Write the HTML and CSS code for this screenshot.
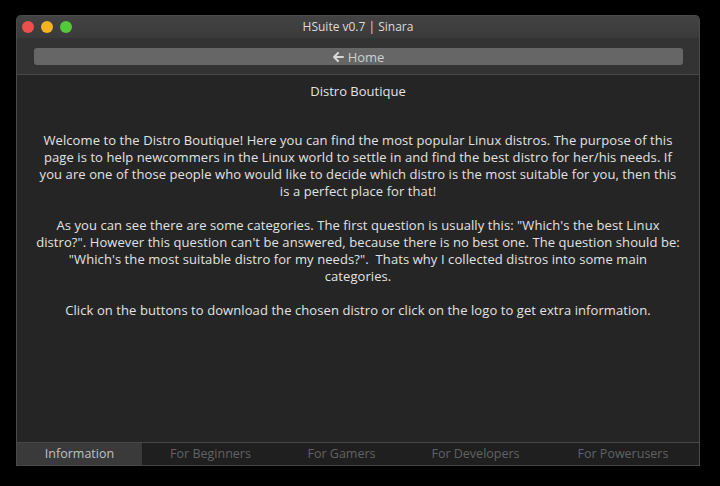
FILE: index.html
```html
<!DOCTYPE html>
<html>
<head>
<meta charset="utf-8">
<link rel="stylesheet" href="styles.css">
</head>
<body>
<div class="window">
  <div class="titlebar">
    <div class="lights">
      <span class="light red"></span>
      <span class="light yellow"></span>
      <span class="light green"></span>
    </div>
    <div class="title">HSuite v0.7 | Sinara</div>
  </div>
  <div class="toolbar">
    <div class="home-btn">
      <svg class="arrow" width="11" height="10" viewBox="0 0 11 10"><path d="M5 1 L1 5 L5 9 M1 5 H10" fill="none" stroke="#d8d8d8" stroke-width="2" stroke-linecap="round" stroke-linejoin="round"/></svg>
      <span>Home</span>
    </div>
  </div>
  <div class="content">
    <div class="heading">Distro Boutique</div>
    <p class="para">Welcome to the Distro Boutique! Here you can find the most popular Linux distros. The purpose of this<br>page is to help newcommers in the Linux world to settle in and find the best distro for her/his needs. If<br>you are one of those people who would like to decide which distro is the most suitable for you, then this<br>is a perfect place for that!</p>
    <p class="para">As you can see there are some categories. The first question is usually this: "Which's the best Linux<br>distro?". However this question can't be answered, because there is no best one. The question should be:<br>"Which's the most suitable distro for my needs?".&nbsp; Thats why I collected distros into some main<br>categories.</p>
    <p class="para">Click on the buttons to download the chosen distro or click on the logo to get extra information.</p>
  </div>
  <div class="tabs">
    <div class="tab active">Information</div>
    <div class="tab">For Beginners</div>
    <div class="tab">For Gamers</div>
    <div class="tab">For Developers</div>
    <div class="tab">For Powerusers</div>
  </div>
</div>
</body>
</html>
```
FILE: styles.css
```css
html, body {
  margin: 0;
  padding: 0;
  background: #000;
  width: 720px;
  height: 486px;
  overflow: hidden;
}
body {
  font-family: "Open Sans", "Noto Sans", sans-serif;
  font-size: 13px;
  color: #e2e2e2;
}
.window {
  margin: 15px 0 0 16px;
  width: 684px;
  height: 451px;
  box-sizing: border-box;
  border: 1px solid #4a4a4a;
  border-bottom: none;
  border-radius: 5px 5px 0 0;
  background: #323232;
  display: flex;
  flex-direction: column;
  overflow: hidden;
}
.titlebar {
  height: 22px;
  flex: none;
  position: relative;
  background: linear-gradient(#434343, #3a3a3a);
  display: flex;
  align-items: center;
  justify-content: center;
}
.lights {
  position: absolute;
  left: 5px;
  top: 5px;
  display: flex;
  gap: 7px;
}
.light {
  width: 12px;
  height: 12px;
  border-radius: 50%;
  display: block;
}
.red { background: #ed4f4c; }
.yellow { background: #f5b222; }
.green { background: #52c83a; }
.title {
  color: #dcdcdc;
  font-size: 12px;
  line-height: 22px;
}
.toolbar {
  height: 36px;
  flex: none;
  box-sizing: border-box;
  padding: 10px 16px 0 17px;
  background: #333333;
}
.home-btn {
  height: 17px;
  background: #666666;
  border-radius: 3px;
  display: flex;
  align-items: center;
  justify-content: center;
  gap: 4px;
  color: #d0d0d0;
  font-size: 13px;
}
.arrow { display: block; }
.content {
  flex: 1;
  border-top: 1px solid #474747;
  background: #252525;
  text-align: center;
  padding-top: 8px;
  line-height: 17px;
}
.heading {
  margin: 0 0 32px;
}
.para {
  margin: 0 0 17px;
  white-space: nowrap;
  letter-spacing: 0.08px;
}
.tabs {
  height: 22px;
  flex: none;
  display: grid;
  grid-template-columns: 125px 137px 125px 143px 1fr;
  border-top: 1px solid #474747;
  border-bottom: 1px solid #474747;
  background: #1f1f1f;
}
.tab {
  text-align: center;
  line-height: 21px;
  color: #626262;
  font-size: 12.5px;
}
.tab.active {
  background: #3a3a3a;
  color: #b9c2cc;
}
```
